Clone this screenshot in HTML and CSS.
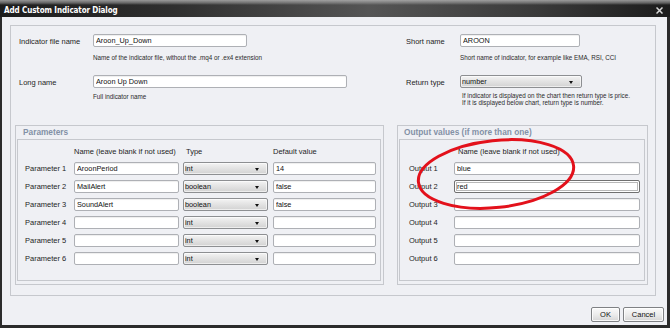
FILE: index.html
```html
<!DOCTYPE html>
<html>
<head>
<meta charset="utf-8">
<link rel="stylesheet" href="styles.css">
</head>
<body>
<div class="window">
  <div class="titlebar">
    <span class="title">Add Custom Indicator Dialog</span>
    <svg class="close" width="7" height="7" viewBox="0 0 7 7"><path d="M0.5 0.5 L6.5 6.5 M6.5 0.5 L0.5 6.5" stroke="#d8d8d8" stroke-width="1.5"/></svg>
  </div>
  <div class="frame">
    <div class="panel">
      <div class="top">
        <div class="top-left">
          <div class="field"><label class="lbl lbl-l">Indicator file name</label><input class="txt w154" type="text" value="Aroon_Up_Down"></div>
          <div class="hint hint-l h1">Name of the indicator file, without the .mq4 or .ex4 extension</div>
          <div class="field f2"><label class="lbl lbl-l">Long name</label><input class="txt w254" type="text" value="Aroon Up Down"></div>
          <div class="hint hint-l h2">Full indicator name</div>
        </div>
        <div class="top-right">
          <div class="field"><label class="lbl lbl-r">Short name</label><input class="txt w120" type="text" value="AROON"></div>
          <div class="hint hint-r h1">Short name of indicator, for example like EMA, RSI, CCI</div>
          <div class="field f2"><label class="lbl lbl-r">Return type</label><div class="select w122"><span>number</span><i class="arrow"></i></div></div>
          <div class="hint hint-r h2r">If indicator is displayed on the chart then return type is price.<br>If it is displayed below chart, return type is number.</div>
        </div>
      </div>
      <div class="groups">
        <div class="group params">
          <div class="group-title">Parameters</div>
          <div class="group-inner pin">
            <div class="pgrid">
              <span></span><span class="hdr">Name (leave blank if not used)</span><span class="hdr hdr-type">Type</span><span class="hdr">Default value</span>

              <span class="rl">Parameter 1</span><input class="txt w105" type="text" value="AroonPeriod"><div class="select w85"><span>int</span><i class="arrow"></i></div><input class="txt w103" type="text" value="14">
              <span class="rl">Parameter 2</span><input class="txt w105" type="text" value="MailAlert"><div class="select w85"><span>boolean</span><i class="arrow"></i></div><input class="txt w103" type="text" value="false">
              <span class="rl">Parameter 3</span><input class="txt w105" type="text" value="SoundAlert"><div class="select w85"><span>boolean</span><i class="arrow"></i></div><input class="txt w103" type="text" value="false">
              <span class="rl">Parameter 4</span><input class="txt w105" type="text" value=""><div class="select w85"><span>int</span><i class="arrow"></i></div><input class="txt w103" type="text" value="">
              <span class="rl">Parameter 5</span><input class="txt w105" type="text" value=""><div class="select w85"><span>int</span><i class="arrow"></i></div><input class="txt w103" type="text" value="">
              <span class="rl">Parameter 6</span><input class="txt w105" type="text" value=""><div class="select w85"><span>int</span><i class="arrow"></i></div><input class="txt w103" type="text" value="">
            </div>
          </div>
        </div>
        <div class="group outputs">
          <div class="group-title">Output values (if more than one)</div>
          <div class="group-inner oin">
            <div class="ogrid">
              <span></span><span class="hdr hdr-out">Name (leave blank if not used)</span>
              <span class="rl">Output 1</span><input class="txt w186" type="text" value="blue">
              <span class="rl">Output 2</span><input class="txt w186 focus" type="text" value="red">
              <span class="rl">Output 3</span><input class="txt w186" type="text" value="">
              <span class="rl">Output 4</span><input class="txt w186" type="text" value="">
              <span class="rl">Output 5</span><input class="txt w186" type="text" value="">
              <span class="rl">Output 6</span><input class="txt w186" type="text" value="">
            </div>
          </div>
        </div>
      </div>
    </div>
    <div class="footer">
      <button class="btn b-ok">OK</button>
      <button class="btn b-cancel">Cancel</button>
    </div>
  </div>
  <svg class="annot" width="180" height="90" viewBox="0 0 180 90"><ellipse cx="87" cy="44" rx="78" ry="33.5" transform="rotate(-6 87 44)" fill="none" stroke="#e3111b" stroke-width="3"/></svg>
</div>
</body>
</html>
```

FILE: styles.css
```css
* { box-sizing: border-box; }
html, body { margin: 0; padding: 0; }
body {
  width: 670px;
  height: 328px;
  overflow: hidden;
  font-family: "Liberation Sans", Arial, sans-serif;
  font-size: 7.5px;
  color: #1e1e1e;
  background: #eff0f4;
}
.window {
  position: relative;
  width: 670px;
  height: 328px;
  display: flex;
  flex-direction: column;
}
.titlebar {
  height: 17px;
  flex: none;
  display: flex;
  align-items: center;
  justify-content: space-between;
  padding: 3px 7px 0 4px;
  background:
    linear-gradient(to bottom, rgba(190,190,190,0.75) 0px, rgba(150,150,150,0.55) 3px, rgba(0,0,0,0) 5px),
    linear-gradient(to right, #1d1d1d 0%, #2e2e2e 25%, #555 55%, #3a3a3a 80%, #1c1c1c 100%);
}
.title {
  color: #fff;
  font-family: "Liberation Sans Narrow", "DejaVu Sans Condensed", "Liberation Sans", sans-serif;
  font-stretch: condensed;
  font-weight: bold;
  font-size: 8px;
  letter-spacing: -0.1px;
}
.close { display: block; margin-top: 1px; }
.frame {
  flex: 1;
  display: flex;
  flex-direction: column;
  border: solid #2b2b2b;
  border-width: 0 3px 3px 2px;
  padding: 8px 3px 0 8px;
  background: #eff0f4;
}
.panel {
  width: 646px;
  height: 271px;
  border: 1px solid #c6c8cd;
  flex: none;
}
.top {
  height: 99px;
  padding: 8px 0 0 8px;
  display: flex;
}
.top-left { width: 387px; }
.field {
  display: flex;
  align-items: center;
  height: 13px;
}
.f2 { margin-top: 14px; }
.lbl { padding-top: 2px; }
.lbl-l { width: 74px; }
.lbl-r { width: 54px; }
.hint {
  font-size: 6.3px;
  line-height: 7px;
  color: #2a2a2a;
}
.hint-l { margin-left: 74px; }
.hint-r { margin-left: 54px; }
.h1 { margin-top: 7px; }
.h2 { margin-top: 5px; }
.h2r { margin-top: 4px; margin-left: 56px; }

.txt {
  display: block;
  height: 13px;
  margin: 0;
  padding: 0 2px;
  border: 1px solid #aeb0b5;
  border-radius: 2px;
  background: #fff;
  box-shadow: inset 0 1px 1px rgba(0,0,0,0.07);
  font-family: "Liberation Sans", Arial, sans-serif;
  font-size: 7.3px;
  line-height: 11px;
  color: #111;
  outline: none;
}
.txt.focus {
  border-color: #707070;
  box-shadow: inset 0 0 0 1px #fff, inset 0 0 0 2px #b8b8b8;
}
.w154 { width: 154px; }
.w254 { width: 254px; }
.w120 { width: 120px; }
.w105 { width: 105px; }
.w103 { width: 103px; }
.w186 { width: 186px; }

.select {
  position: relative;
  height: 13px;
  border: 1px solid #8d8f92;
  border-radius: 2px;
  background: linear-gradient(to bottom, #f4f4f4 0%, #e4e4e4 45%, #d2d2d2 100%);
  box-shadow: inset 0 0 0 1px rgba(255,255,255,0.6);
  font-size: 7.3px;
  color: #111;
  display: flex;
  align-items: center;
  padding-left: 1px;
}
.w122 { width: 122px; }
.w85 { width: 85px; }
.arrow {
  position: absolute;
  right: 8px;
  top: 5px;
  width: 0;
  height: 0;
  border-left: 2.5px solid transparent;
  border-right: 2.5px solid transparent;
  border-top: 3px solid #111;
}

.groups {
  display: flex;
  gap: 13px;
  padding-left: 4px;
}
.group {
  height: 160px;
  border: 1px solid #c6c8cd;
  display: flex;
  flex-direction: column;
}
.params { width: 369px; }
.outputs { width: 251px; }
.group-title {
  height: 13px;
  line-height: 13px;
  padding-left: 7px;
  font-weight: bold;
  font-size: 8.3px;
  color: #8391a6;
}
.outputs .group-title { padding-left: 6px; }
.group-inner {
  flex: 1;
  margin: 0 2px 3px 1px;
  border: 1px solid #c6c8cd;
  padding-top: 7px;
}
.pin { padding-left: 7px; }
.oin { padding-left: 9px; }
.pgrid {
  display: grid;
  grid-template-columns: 49px 109px 90px 103px;
  grid-auto-rows: 13px;
  grid-template-rows: 10px;
  row-gap: 5px;
  align-items: center;
}
.ogrid {
  display: grid;
  grid-template-columns: 45px 186px;
  grid-auto-rows: 13px;
  grid-template-rows: 10px;
  row-gap: 5px;
  align-items: center;
}
.hdr { line-height: 10px; white-space: nowrap; }
.hdr-type { padding-left: 3px; }
.hdr-out { padding-left: 4px; }
.rl { white-space: nowrap; }

.footer {
  display: flex;
  justify-content: flex-end;
  gap: 3px;
  margin-top: 11px;
}
.btn {
  height: 15px;
  margin: 0;
  padding: 0;
  border: 1px solid #7f8184;
  border-radius: 2px;
  background: linear-gradient(to bottom, #fafafa 0%, #ececec 50%, #d6d6d6 100%);
  box-shadow: inset 0 0 0 1px rgba(255,255,255,0.8);
  font-family: "Liberation Sans", Arial, sans-serif;
  font-size: 7.5px;
  color: #111;
}
.b-ok { width: 29px; }
.b-cancel { width: 41px; }

.annot {
  position: absolute;
  left: 409px;
  top: 130px;
}
```
